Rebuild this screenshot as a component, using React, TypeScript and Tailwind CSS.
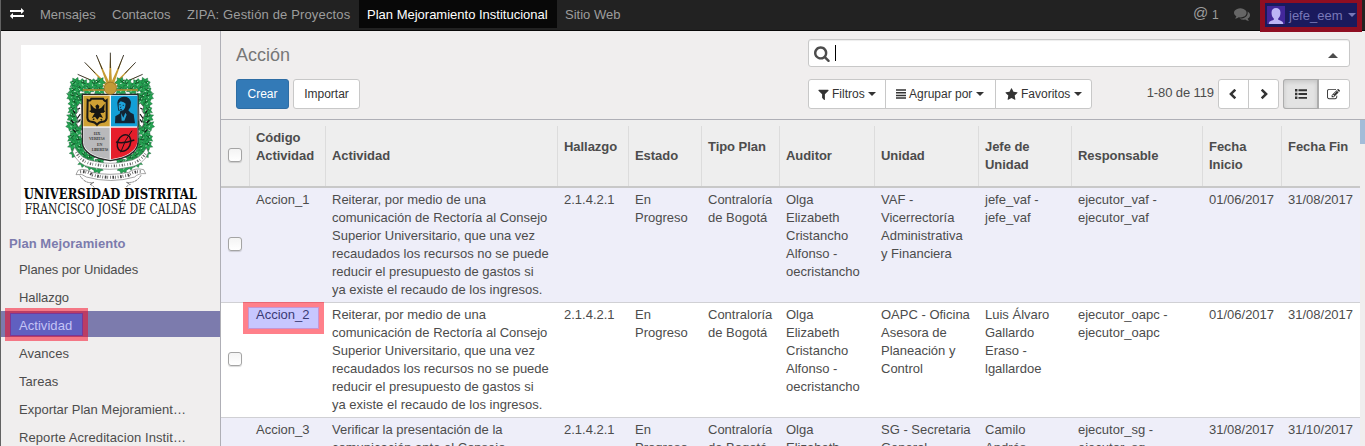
import React from "react";

type IconProps = { d: string; className: string };

function Icon({ d, className }: IconProps) {
  return (
    <svg viewBox="0 0 1792 1792" fill="currentColor" className={className}>
      <path d={d} />
    </svg>
  );
}

const icons = {
  exchange:
    "M1792 1184v192q0 13-9.5 22.5t-22.5 9.5h-1376v192q0 13-9.5 22.5t-22.5 9.5q-12 0-24-10l-319-320q-9-9-9-22 0-14 9-23l320-320q9-9 23-9 13 0 22.5 9.5t9.5 22.5v192h1376q13 0 22.5 9.5t9.5 22.5zm0-544q0 14-9 23l-320 320q-9 9-23 9-13 0-22.5-9.5t-9.5-22.5v-192h-1376q-13 0-22.5-9.5t-9.5-22.5v-192q0-13 9.5-22.5t22.5-9.5h1376v-192q0-14 9-23t23-9q12 0 24 10l319 319q9 9 9 23z",
  search:
    "M1152 832q0-185-131.5-316.5t-316.5-131.5-316.5 131.5-131.5 316.5 131.5 316.5 316.5 131.5 316.5-131.5 131.5-316.5zm512 832q0 52-38 90t-90 38q-54 0-90-38l-343-342q-179 124-399 124-143 0-273.5-55.5t-225-150-150-225-55.5-273.5 55.5-273.5 150-225 225-150 273.5-55.5 273.5 55.5 225 150 150 225 55.5 273.5q0 220-124 399l343 343q37 37 37 90z",
  comments:
    "M1408 768q0 139-94 257t-256.5 186.5-353.5 68.5q-86 0-176-16-124 88-278 128-36 9-86 16h-3q-11 0-20.5-8t-11.5-21q-1-3-1-6.5t.5-6.5 2-6l2.5-5 3.5-5.5 4-5 4.5-5 4-4.5q5-6 23-25t26-29.5 22.5-29 25-38.5 20.5-44q-124-72-195-177t-71-224q0-139 94-257t256.5-186.5 353.5-68.5 353.5 68.5 256.5 186.5 94 257zm384 256q0 120-71 224.5t-195 176.5q10 24 20.5 44t25 38.5 22.5 29 26 29.5 23 25q1 1 4 4.5t4.5 5 4 5 3.5 5.5l2.5 5 2 6 .5 6.5-1 6.5q-3 14-13 22t-22 7q-50-7-86-16-154-40-278-128-90 16-176 16-271 0-472-132 58 4 88 4 161 0 309-45t264-129q125-92 192-212t67-254q0-77-23-152 129 71 204 178t75 230z",
  edit: "M888 1184l116-116-152-152-116 116v56h96v96h56zm440-720q-16-16-33 1l-350 350q-17 17-1 33t33-1l350-350q17-17 1-33zm80 594v190q0 119-84.5 203.5t-203.5 84.5h-832q-119 0-203.5-84.5t-84.5-203.5v-832q0-119 84.5-203.5t203.5-84.5h832q63 0 117 25 15 7 18 23 3 17-9 29l-49 49q-14 14-32 8-23-6-45-6h-832q-66 0-113 47t-47 113v832q0 66 47 113t113 47h832q66 0 113-47t47-113v-126q0-13 9-22l64-64q15-15 35-7t20 29zm-96-738l288 288-672 672h-288v-288zm444 132l-92 92-288-288 92-92q28-28 68-28t68 28l152 152q28 28 28 68t-28 68z",
  filter:
    "M1595 295q17 41-14 70l-493 493v742q0 42-39 59-13 5-25 5-27 0-45-19l-256-256q-19-19-19-45v-486l-493-493q-31-29-14-70 17-39 59-39h1280q42 0 59 39z",
  star: "M1728 647q0 22-26 48l-363 354 86 500q1 7 1 20 0 21-10.5 35.5t-30.5 14.5q-19 0-40-12l-449-236-449 236q-22 12-40 12-21 0-31.5-14.5t-10.5-35.5q0-6 2-20l86-500-364-354q-25-27-25-48 0-37 56-46l502-73 225-455q19-41 49-41t49 41l225 455 502 73q56 9 56 46z",
  left: "M1203 544q0 13-10 23l-393 393 393 393q10 10 10 23t-10 23l-166 166q-10 10-23 10t-23-10l-582-582q-10-10-10-23t10-23l582-582q10-10 23-10t23 10l166 166q10 10 10 23z",
  right:
    "M589 544q0 13 10 23l393 393-393 393q-10 10-10 23t10 23l166 166q10 10 23 10t23-10l582-582q10-10 10-23t-10-23l-582-582q-10-10-23-10t-23 10l-166 166q-10 10-10 23z",
};

function Caret({ className }: { className: string }) {
  return (
    <svg viewBox="0 0 8 4" preserveAspectRatio="none" fill="currentColor" className={className}>
      <path d="M0 0h8L4 4z" />
    </svg>
  );
}

const rays: [number, number, number][] = [
  [173, 103, 6], [194, 67, 6], [229, 45, 6], [271, 38, 6],
  [311, 45, 6], [347, 67, 6], [368, 103, 6],
];

const leaves: [number, number, number][] = [
  [163, 127, 9], [178, 141, 11], [161, 149, 10], [190, 128, 9], [205, 146, 11], [222, 130, 10], [238, 147, 9], [234, 125, 7],
  [158, 166, 9], [175, 168, 10], [163, 186, 8], [180, 179, 7], [158, 206, 9], [158, 228, 8],
  [174, 251, 9], [156, 253, 8], [169, 272, 10], [157, 290, 10], [175, 298, 10], [160, 312, 10],
  [180, 320, 11], [167, 336, 10], [191, 343, 11], [209, 353, 11], [190, 363, 10], [213, 372, 10], [236, 365, 9], [233, 380, 7],
];

function Foliage() {
  return (
    <g>
      {leaves.map(([x, y, r], i) => (
        <g key={i} transform={`rotate(${(i * 53) % 90} ${x} ${y})`}>
          <path
            d={`M${x - r - 4} ${y - 1}l8-4 0-8 8 4 8-6 1 9 9 5-8 5 3 9-9 0-6 7-5-8-9 2 4-8z`}
            fill="#25a352"
            stroke="#0e572b"
            strokeWidth="1"
          />
          <path d={`M${x - 5} ${y + 6}q4-3 10-11M${x} ${y}l-7-4`} stroke="#12401f" strokeWidth="2.2" fill="none" />
          <path d={`M${x + 3} ${y + 5}l5-1M${x - 6} ${y + 1}l3-1`} stroke="#d6f0dd" strokeWidth="2.4" />
        </g>
      ))}
      <path d="M179 190l-9 11 5 12-8 11 8 18-5 10 5 10 8-9 2-60z" fill="#fff" stroke="#444" strokeWidth="2" />
      <path d="M180 204l-6 4m7 14-9 13m9 3-6 9M153 240l8 9m-2 20 8 8m-8-66 6 9" stroke="#111" strokeWidth="3.5" />
    </g>
  );
}

function Logo() {
  return (
    <svg viewBox="3 15 540 525" className="block h-[175px] w-[180px] overflow-visible bg-white">
      {rays.map(([x, y, w], i) => (
        <g key={i}>
          <path d={`M${x} ${y}L${271 - w} 146h${2 * w}z`} fill="#c69b33" />
          <path d={`M${x} ${y}L271 146`} stroke="#25221c" strokeWidth="2.6" strokeDasharray="46 200" />
        </g>
      ))}
      <Foliage />
      <g transform="matrix(-1 0 0 1 541 0)">
        <Foliage />
      </g>
      <path d="M188 150h166" stroke="#b98b2c" strokeWidth="4" />
      <path d="M187 163h167v144q-3 43-83 55-81-12-84-55z" fill="#f5f5f5" stroke="#292929" strokeWidth="4" />
      <path d="M190 167h79v92h-79z" fill="#cfa134" />
      <path d="M273 167h79v92h-79z" fill="#139fd6" />
      <path d="M190 263h79v95q-76-12-79-54z" fill="#b9b9bb" />
      <path d="M273 263h79v41q-3 42-79 54z" fill="#e61e2b" />
      <path d="M203 180q8 5 11-4h35q5 10 11 5v53q-2 11-12 11-11 0-17 9-6-9-17-9-11 0-12-12z" fill="none" stroke="#1c1a15" strokeWidth="6" />
      <path d="M211 191l11 13 7 3-3-9 6-5 6 5-2 9 8-4 10-12-2 27-11 1 8 15-10-4-7 9-7-9-10 5 9-16-11-1z" fill="#171713" />
      <path d="M209 213l7 2m34 0 5-2M219 239l4-3m19 2 4 3" stroke="#171713" strokeWidth="4" />
      <path d="M294 207l-2-19q2-17 20-18 18 0 21 17l-2 15-6 9 7 7 9 5 4 27h-60l1-21 13-8 2-9-5 1z" fill="#122433" />
      <path d="M296 190l6-6 9 3 6 4-2 12-5 8-11 1-3-8z" fill="#1da4dd" />
      <path d="M298 194h4m6 2h4m-9 4-2 4m5 5-6-1" stroke="#142838" strokeWidth="2.5" />
      <path d="M303 219l7 14 6-15 4 6-7 18h-8z" fill="#249fd1" />
      <ellipse cx="312" cy="309" rx="19" ry="26" transform="rotate(24 312 309)" fill="none" stroke="#211117" strokeWidth="4.5" />
      <path d="M288 306q22 6 55-6" fill="none" stroke="#211117" strokeWidth="4.5" />
      <path d="M336 272q-22 27-34 65" fill="none" stroke="#211117" strokeWidth="3" />
      <circle cx="271" cy="145" r="18.5" fill="#c39a37" stroke="#8b6a25" strokeWidth="2" />
      <g fill="#3c3c3c" fontFamily="Liberation Serif, serif" fontSize="12" fontWeight="700">
        <text x="221" y="285" textLength="20">LUX</text>
        <text x="207" y="300" textLength="47">VERITAS</text>
        <text x="231" y="317" textLength="16">EN</text>
        <text x="215" y="333" textLength="50">LIBERTAS</text>
      </g>
      <path d="M164 322q18 36 59 42 48 12 97 0 42-6 59-40l6 13q-14 40-61 45-54 12-111 0-41-7-55-47z" fill="#fff" stroke="#666" strokeWidth="1.6" />
      <path d="M168 337q19 34 57 36 48 10 96 0 37-3 57-35" fill="none" stroke="#666" strokeWidth="8" strokeDasharray="2 5 4 4 2 7" />
      <path d="M174 391q18-8 41 6 55 12 111 0 20-15 45-8l6 12q-22-2-33 10-71 21-145 0-13-12-31-7z" fill="#fff" stroke="#666" strokeWidth="1.8" />
      <path d="M181 395q25-1 36 10 54 14 109 0 16-12 40-10" fill="none" stroke="#444" strokeWidth="9" strokeDasharray="2 5 5 3 2 6" />
      <path d="M180 407q16 26 42 20l-12 6q9 3 13 10m140-37q-15 25-44 21l12 6q-10 3-12 9" fill="none" stroke="#777" strokeWidth="3" strokeDasharray="7 2" />
      <text x="11" y="477" textLength="520" lengthAdjust="spacingAndGlyphs" fontFamily="DejaVu Serif Condensed, DejaVu Serif, serif" fontSize="42" fontWeight="700" fill="#080808">UNIVERSIDAD DISTRITAL</text>
      <text x="14" y="522" textLength="515" lengthAdjust="spacingAndGlyphs" fontFamily="DejaVu Serif Condensed, DejaVu Serif, serif" fontSize="42" fill="#202020">FRANCISCO JOSÉ DE CALDAS</text>
    </svg>
  );
}

const menu: { label: string; tracking: string }[] = [
  { label: "Planes por Unidades", tracking: "tracking-[-0.08px]" },
  { label: "Hallazgo", tracking: "tracking-[-0.08px]" },
  { label: "Actividad", tracking: "tracking-[0.05px]" },
  { label: "Avances", tracking: "tracking-[0.05px]" },
  { label: "Tareas", tracking: "tracking-[0.05px]" },
  { label: "Exportar Plan Mejoramient…", tracking: "tracking-normal" },
  { label: "Reporte Acreditacion Instit…", tracking: "tracking-[0.08px]" },
];

const headers: { lines: string[]; pad: string }[] = [
  { lines: ["Código", "Actividad"], pad: "pt-[3px]" },
  { lines: ["Actividad"], pad: "pt-[21px]" },
  { lines: ["Hallazgo"], pad: "pt-[12px]" },
  { lines: ["Estado"], pad: "pt-[21px]" },
  { lines: ["Tipo Plan"], pad: "pt-[12px]" },
  { lines: ["Auditor"], pad: "pt-[21px]" },
  { lines: ["Unidad"], pad: "pt-[21px]" },
  { lines: ["Jefe de", "Unidad"], pad: "pt-[12px]" },
  { lines: ["Responsable"], pad: "pt-[21px]" },
  { lines: ["Fecha", "Inicio"], pad: "pt-[12px]" },
  { lines: ["Fecha Fin"], pad: "pt-[12px]" },
];

const rows: string[][][] = [
  [
    ["Accion_1"],
    ["Reiterar, por medio de una", "comunicación de Rectoría al Consejo", "Superior Universitario, que una vez", "recaudados los recursos no se puede", "reducir el presupuesto de gastos si", "ya existe el recaudo de los ingresos."],
    ["2.1.4.2.1"],
    ["En", "Progreso"],
    ["Contraloría", "de Bogotá"],
    ["Olga", "Elizabeth", "Cristancho", "Alfonso -", "oecristancho"],
    ["VAF -", "Vicerrectoría", "Administrativa", "y Financiera"],
    ["jefe_vaf -", "jefe_vaf"],
    ["ejecutor_vaf -", "ejecutor_vaf"],
    ["01/06/2017"],
    ["31/08/2017"],
  ],
  [
    ["Accion_2"],
    ["Reiterar, por medio de una", "comunicación de Rectoría al Consejo", "Superior Universitario, que una vez", "recaudados los recursos no se puede", "reducir el presupuesto de gastos si", "ya existe el recaudo de los ingresos."],
    ["2.1.4.2.1"],
    ["En", "Progreso"],
    ["Contraloría", "de Bogotá"],
    ["Olga", "Elizabeth", "Cristancho", "Alfonso -", "oecristancho"],
    ["OAPC - Oficina", "Asesora de", "Planeación y", "Control"],
    ["Luis Álvaro", "Gallardo", "Eraso -", "lgallardoe"],
    ["ejecutor_oapc -", "ejecutor_oapc"],
    ["01/06/2017"],
    ["31/08/2017"],
  ],
  [
    ["Accion_3"],
    ["Verificar la presentación de la", "comunicación ante el Consejo"],
    ["2.1.4.2.1"],
    ["En", "Progreso"],
    ["Contraloría", "de Bogotá"],
    ["Olga", "Elizabeth"],
    ["SG - Secretaria", "General"],
    ["Camilo", "Andrés"],
    ["ejecutor_sg -", "ejecutor_sg"],
    ["31/08/2017"],
    ["31/10/2017"],
  ],
];

const grid = "grid grid-cols-[28px_76px_232px_71px_73px_78px_95px_104px_93px_131px_79px_79px]";

function Checkbox() {
  return (
    <span className="block h-[14px] w-[14px] rounded-[3px] border border-[#a4a4a4] bg-gradient-to-b from-[#f4f4f4] to-white shadow-[0_1px_1px_rgba(0,0,0,0.15)]" />
  );
}

function Table() {
  return (
    <div className="flex min-h-0 flex-1 overflow-hidden bg-[#f0eeee]">
      <div className="w-[1139px] shrink-0">
        <div className={`${grid} h-[68px] border-b-2 border-[#c8c8c8] bg-[#eeeeee]`}>
          <div className="pt-[28px] pl-[7px]"><Checkbox /></div>
          {headers.map((h, i) => (
            <div key={i} className="mt-[6px] border-l border-[#dcdcdc] pl-[6px] font-bold tracking-[-0.05px]">
              <div className={h.pad}>{h.lines.map((l) => <div key={l}>{l}</div>)}</div>
            </div>
          ))}
        </div>
        {rows.map((row, r) => (
          <div key={r} className={`${grid} relative h-[115px] border-b border-[#d0d0d4] ${r % 2 ? "bg-white" : "bg-[#eeeef9]"}`}>
            <div className="flex items-center pb-[2px] pl-[7px]"><Checkbox /></div>
            {row.map((cell, c) => (
              <div key={c} className="pt-[3px] pl-[7px] whitespace-nowrap">
                {cell.map((l) => <div key={l}>{l}</div>)}
              </div>
            ))}
            {r === 1 && (
              <div className="absolute -top-px left-[22px] z-10 h-8 w-[81px] border-[5px] border-[#ff0014]/50 bg-[#0000ff]/22 bg-clip-padding shadow-[inset_0_0_0_1px_rgba(200,0,80,.25)]" />
            )}
          </div>
        ))}
      </div>
      <div className="h-6 w-[5px] bg-[#a3bcd8]" />
    </div>
  );
}

const toolButton = "flex items-center border-[#c8c8c8]";

export default function App() {
  return (
    <div className="relative flex h-[446px] w-[1365px] flex-col overflow-hidden bg-[#f0eeee] font-['Liberation_Sans',sans-serif] text-[13px] leading-[18px] text-[#4c4c4c]">
      <nav className="flex h-[31px] shrink-0 border-b border-[#080808] bg-[#222] text-[#9d9d9d]">
        <div className="w-7 pt-[6px] pl-[10px]"><Icon d={icons.exchange} className="h-[14px] w-[14px] text-white" /></div>
        <a className="w-[72px] pt-[6px] pl-3">Mensajes</a>
        <a className="w-[75px] pt-[6px] pl-3">Contactos</a>
        <a className="w-[184px] pt-[6px] pl-3 tracking-[0.15px]">ZIPA: Gestión de Proyectos</a>
        <a className="h-7 w-[198px] bg-[#080808] pt-[6px] pl-2 text-white">Plan Mejoramiento Institucional</a>
        <a className="pt-[6px] pl-2">Sitio Web</a>
        <div className="ml-auto flex w-[172px]">
          <span className="w-[19px] pt-[4px] text-[15px]">@</span>
          <span className="w-[22px] pt-[6px] text-[12px]">1</span>
          <Icon d={icons.comments} className="mt-[6px] h-[16px] w-[16px] text-[#666]" />
          <div className="relative ml-[10px] h-8 w-[102px] border-[5px] border-t-[3px] border-[#8f0e22] bg-[#1a1a5d] text-[#7878b8]">
            <svg viewBox="0 0 18 18" className="absolute top-[3px] left-[2px] h-[18px] w-[18px]">
              <path fill="#42279a" d="M0 0h18v18H0z" />
              <path fill="#bdb5f6" d="M9 2c3 0 4.800 2 4.400 5.500 0 2-1 4-2.200 5v1.200c2 1 4.300 1 5 3.300v1H1.800v-1c.7-2.300 3-2.300 5-3.300v-1.200c-1.200-1-2.200-3-2.200-5C4.200 4 6 2 9 2z" />
            </svg>
            <span className="block pt-[4px] pl-6">jefe_eem</span>
            <Caret className="absolute top-[10px] right-[1px] h-[4px] w-[8px]" />
          </div>
        </div>
      </nav>
      <div className="flex min-h-0 flex-1">
        <aside className="flex w-[221px] shrink-0 flex-col border-r border-[#afafb6]">
          <div className="pt-[14px] pl-[21px]"><Logo /></div>
          <div className="mt-[15px] h-[21px] pl-[9px] font-bold tracking-[0.06px] text-[#7c7bad]">Plan Mejoramiento</div>
          {menu.map(({ label, tracking }) => (
            <div key={label} className={`relative h-7 shrink-0 pl-[19px] whitespace-nowrap ${tracking} ${label === "Actividad" ? "text-[#c4c4f6]" : ""}`}>
              {label === "Actividad" ? (
                <>
                  <div className="mt-[2px] -ml-[19px] h-[26px] bg-[#7c7bad]" />
                  <div className="absolute top-0 left-[5px] -mt-px h-[33px] w-[83px] border-[5px] border-[#f8001c]/50 bg-[#6060c0] bg-clip-padding shadow-[inset_0_0_0_1px_#7b3795]" />
                  <span className="absolute top-[8px] left-[19px]">{label}</span>
                </>
              ) : (
                <div className="pt-[8px]">{label}</div>
              )}
            </div>
          ))}
        </aside>
        <main className="flex min-w-0 flex-1 flex-col">
          <div className="flex h-[89px] shrink-0 justify-between border-b border-[#afafb6]">
            <div className="pl-[15px]">
              <h1 className="mt-[12px] h-[36px] text-[18px] leading-6 text-[#777]">Acción</h1>
              <div className="flex gap-[4px] text-[12px]">
                <button className="h-[30px] w-[53px] rounded-[3px] border border-[#2e6da4] bg-[#337ab7] text-white">Crear</button>
                <button className="h-[30px] w-[67px] rounded-[3px] border border-[#c8c8c8] bg-white text-[#333]">Importar</button>
              </div>
            </div>
            <div className="mr-[15px] w-[542px] pt-[8px]">
              <div className="flex h-[28px] items-center rounded-[3px] border border-[#c8c8c8] bg-white shadow-[inset_0_1px_1px_rgba(0,0,0,.07)]">
                <Icon d={icons.search} className="ml-[5px] h-[17px] w-[17px]" />
                <span className="ml-[4px] h-4 w-px bg-black" />
                <Caret className="mt-[4px] mr-[11px] ml-auto h-[5px] w-[10px] rotate-180" />
              </div>
              <div className="mt-[12px] flex h-[30px] text-[12px] text-[#333]">
                <div className="flex w-[284px] rounded-[3px] border border-[#c8c8c8] bg-white">
                  <div className={`${toolButton} w-[77px] border-r pl-[8px]`}><Icon d={icons.filter} className="mr-[2px] h-[13px] w-[13px]" />Filtros<Caret className="ml-[3px] h-[4px] w-[8px]" /></div>
                  <div className={`${toolButton} w-[110px] border-r pl-[10px]`}>
                    <svg viewBox="0 0 10 10" className="mr-[3px] h-[10px] w-[10px]"><path d="M0 1h10M0 3.700h10M0 6.400h10M0 9.100h10" stroke="currentColor" strokeWidth="1.500" /></svg>
                    Agrupar por<Caret className="ml-[4px] h-[4px] w-[8px]" />
                  </div>
                  <div className={`${toolButton} pl-[9px]`}><Icon d={icons.star} className="mr-[3px] h-[13px] w-[13px]" />Favoritos<Caret className="ml-[4px] h-[4px] w-[8px]" /></div>
                </div>
                <span className="ml-auto pt-[5px] pr-[4px] text-[13px] tracking-[-0.1px] text-[#4c4c4c]">1-80 de 119</span>
                <div className="flex w-[61px] items-center rounded-[3px] border border-[#c8c8c8] bg-white">
                  <div className="flex h-full w-[30px] items-center justify-center border-r border-[#c8c8c8]"><Icon d={icons.left} className="-mt-px h-[15px] w-[15px]" /></div>
                  <div className="flex flex-1 justify-center"><Icon d={icons.right} className="-mt-px h-[15px] w-[15px]" /></div>
                </div>
                <div className="ml-[4px] flex w-[67px] rounded-[3px] border border-[#c8c8c8] bg-white">
                  <div className="flex w-[34px] items-center justify-center rounded-l-[2px] border-r border-[#adadad] bg-[#e3e3e3] shadow-[inset_0_2px_4px_rgba(0,0,0,.13),0_0_0_1px_#adadad]">
                    <svg viewBox="0 0 12 10" fill="currentColor" className="h-[10px] w-[12px]"><path d="M0 0h2.400v2.400H0zM0 3.800h2.400v2.400H0zM0 7.600h2.400V10H0zM3.500.3H12v1.900H3.500zM3.500 4.100H12V6H3.500zM3.500 7.900H12v1.900H3.500z" /></svg>
                  </div>
                  <div className="flex flex-1 items-center justify-center"><Icon d={icons.edit} className="h-[13px] w-[13px]" /></div>
                </div>
              </div>
            </div>
          </div>
          <Table />
        </main>
      </div>
      <div className="absolute top-0 left-0 h-full w-px bg-[#626262]" />
    </div>
  );
}
